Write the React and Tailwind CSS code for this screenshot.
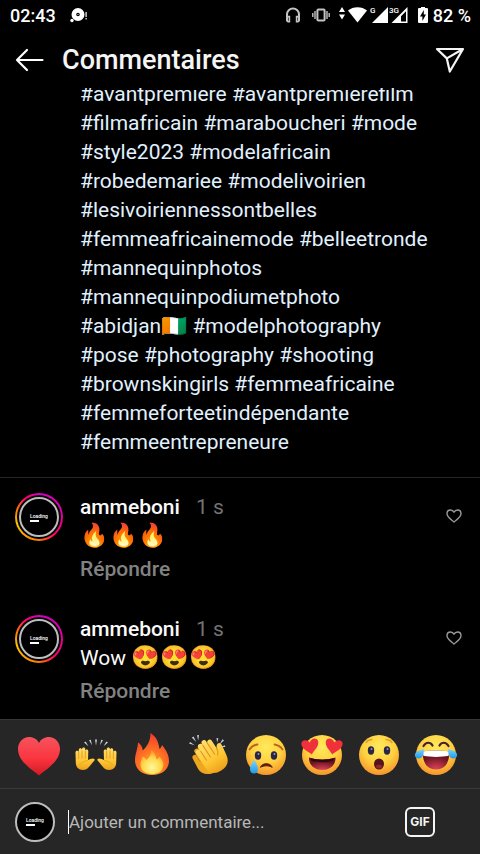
import React, { useState } from 'react';

const hashtags = [
  'avantpremiere', 'avantpremierefilm', 'filmafricain', 'maraboucheri', 'mode',
  'style2023', 'modelafricain', 'robedemariee', 'modelivoirien',
  'lesivoiriennessontbelles', 'femmeafricainemode', 'belleetronde',
  'mannequinphotos', 'mannequinpodiumetphoto', 'abidjan🇨🇮', 'modelphotography',
  'pose', 'photography', 'shooting', 'brownskingirls', 'femmeafricaine',
  'femmeforteetindépendante', 'femmeentrepreneure',
];

const comments = [
  { id: 1, user: 'ammeboni', time: '1 s', emojis: '🔥🔥🔥' },
  { id: 2, user: 'ammeboni', time: '1 s', text: 'Wow ', emojis: '😍😍😍' },
];

/* ---------- status bar ---------- */

function StatusBar() {
  return (
    <div className="flex h-8 items-center justify-between pl-[10px] pr-[9px] text-[18px] leading-8 font-medium">
      <div className="flex items-center gap-[14px]">
        <span>02:43</span>
        <svg width="18" height="18" viewBox="0 0 18 18" fill="#fff">
          <path fillRule="evenodd" d="M8 1a6.500 6.500 0 1 1 0 13A6.500 6.500 0 0 1 8 1Zm0 4.700a1.800 1.800 0 1 0 0 3.600 1.800 1.800 0 0 0 0-3.600Z" />
          <circle cx="8" cy="7.500" r=".6" />
          <circle cx="2" cy="13.500" r="1.700" />
          <rect x="15.500" y="5" width="1.200" height="5" />
          <rect x="15.500" y="11" width="1.200" height="1.400" />
        </svg>
      </div>
      <div className="flex items-center">
        <svg width="16" height="18" viewBox="0 0 16 18" fill="none" stroke="#c4c4c4" strokeWidth="2" className="mr-[11px]">
          <path d="M2 14V7.500a6 6 0 0 1 12 0V14" />
          <path d="M2 9.600h2.400v5H3.200A1.200 1.200 0 0 1 2 13.400ZM14 9.600h-2.400v5h1.200a1.200 1.200 0 0 0 1.200-1.200Z" strokeWidth="1.600" />
        </svg>
        <svg width="18" height="18" viewBox="0 0 18 18" fill="none" stroke="#c4c4c4" className="mr-[9px]">
          <rect x="5.400" y="2.400" width="7.200" height="11.200" rx="1" strokeWidth="2" />
          <path d="M3 4v8M.8 6v4M15 4v8M17.200 6v4" strokeWidth="1.400" />
        </svg>
        <svg width="28" height="18" viewBox="0 0 28 18" fill="#fff" className="mr-[3px]">
          <path d="M3 0l3 5H0ZM3 12.500l3-5H0Z" />
          <path d="M9 3.500C14-1 23-1 28 3.500L18.500 15.500Z" />
        </svg>
        <svg width="18" height="18" viewBox="0 0 18 18" fill="#fff" className="mr-px">
          <path d="M18 0v16H2Z" />
          <text x="0" y="6" fontSize="8" fontWeight="500">G</text>
        </svg>
        <svg width="19" height="18" viewBox="0 0 19 18" fill="#fff" className="mr-[10px]">
          <path fillRule="evenodd" d="M18.500 0v16H2.500ZM17 4.200V14.500H12V9.200Z" />
          <text x="0" y="6" fontSize="8" fontWeight="500" stroke="#000" strokeWidth="2" paintOrder="stroke">3G</text>
        </svg>
        <svg width="10" height="18" viewBox="0 0 10 18" className="mr-[5px]">
          <path d="M3 -1h4v2h2q1 0 1 1v13q0 1-1 1H1q-1 0-1-1V2q0-1 1-1h2Z" fill="#fff" />
          <path d="M5.800 3L2 9.400h2.400V14L8 7.600H5.800Z" fill="#000" />
        </svg>
        <span>82 %</span>
      </div>
    </div>
  );
}

/* ---------- header ---------- */

function Header() {
  return (
    <header className="flex h-14 items-center px-[15px]">
      <button type="button" aria-label="Retour" className="mr-[18px]">
        <svg width="29" height="24" viewBox="0 0 29 24" fill="none" stroke="#fff" strokeWidth="2.200" strokeLinecap="round" strokeLinejoin="round">
          <path d="M12 2L2 12l10 10M2 12h25.500" />
        </svg>
      </button>
      <h1 className="flex-1 text-[27px] leading-8 font-medium text-[#f5f5f5]">Commentaires</h1>
      <button type="button" aria-label="Partager">
        <svg width="30" height="26" viewBox="0 0 30 26" fill="none" stroke="#f5f5f5" strokeWidth="2.200" strokeLinejoin="round">
          <path d="M2 2H28L14.800 24.500L11.800 11.400ZM11.800 11.400L28 2" />
        </svg>
      </button>
    </header>
  );
}

/* ---------- comments ---------- */

function Avatar() {
  return (
    <span className="flex size-10 shrink-0 flex-col items-start justify-center rounded-full border-2 border-[#bdbdbd] bg-black pl-[9px]">
      <span className="text-[5px] leading-[6px] font-medium text-white">Loading</span>
      <span className="mt-px h-[2px] w-[9px] bg-white" />
    </span>
  );
}

function Comment({ comment }) {
  const [liked, setLiked] = useState(false);

  return (
    <li className="flex items-start">
      <span className="mr-[17px] shrink-0 rounded-full bg-[conic-gradient(#d300c5,#e0009b_25%,#ff0069_38%,#ff7a00_50%,#ffc400_70%,#ff7a00_80%,#ff0069_90%,#d300c5)] p-[2px]">
        <span className="flex rounded-full bg-black p-[2px]">
          <Avatar />
        </span>
      </span>
      <div className="flex-1 text-[21px] leading-[29px]">
        <p>
          <a href="#profil" className="mr-4 font-medium text-[#fafafa]">{comment.user}</a>
          <span className="text-[#737373]">{comment.time}</span>
        </p>
        <p className="text-[#fafafa]">
          {comment.text}
          <span className="text-[23px] leading-none">{comment.emojis}</span>
        </p>
        <button type="button" className="mt-1 block font-medium text-[#828282]">Répondre</button>
      </div>
      <button type="button" aria-label="J’aime" onClick={() => setLiked(!liked)} className="mt-4">
        <svg width="16" height="14" viewBox="0 0 16 14" fill={liked ? '#ff3040' : 'none'} stroke="#9a9a9a" strokeWidth="1.400" strokeLinejoin="round">
          <path d="M8 13C4.500 10 1 7.800 1 4.700C1 2.500 2.600 1 4.500 1C6.200 1 7.300 1.900 8 3.200C8.700 1.900 9.800 1 11.500 1C13.400 1 15 2.500 15 4.700C15 7.800 11.500 10 8 13Z" />
        </svg>
      </button>
    </li>
  );
}

/* ---------- quick reactions ---------- */

function Gradients() {
  return (
    <svg width="0" height="0" className="absolute" aria-hidden="true">
      <defs>
        <radialGradient id="face" cx=".5" cy=".3" r=".72">
          <stop offset="0" stopColor="#ffe95c" />
          <stop offset=".55" stopColor="#ffd140" />
          <stop offset="1" stopColor="#f5912a" />
        </radialGradient>
        <linearGradient id="heart" x1="0" y1="0" x2="0" y2="1">
          <stop offset="0" stopColor="#f5535c" />
          <stop offset=".55" stopColor="#fb3640" />
          <stop offset="1" stopColor="#d01a24" />
        </linearGradient>
        <radialGradient id="flame" cx=".5" cy=".8" r=".75">
          <stop offset="0" stopColor="#ffb52e" />
          <stop offset=".5" stopColor="#ff7424" />
          <stop offset="1" stopColor="#f4402c" />
        </radialGradient>
        <radialGradient id="core" cx=".5" cy=".72" r=".65">
          <stop offset="0" stopColor="#fff79a" />
          <stop offset=".6" stopColor="#ffd94a" />
          <stop offset="1" stopColor="#ff9c2e" />
        </radialGradient>
        <linearGradient id="hand" x1="0" y1="0" x2="0" y2="1">
          <stop offset="0" stopColor="#ffdf6e" />
          <stop offset=".6" stopColor="#ffc733" />
          <stop offset="1" stopColor="#eda01c" />
        </linearGradient>
        <linearGradient id="tear" x1="0" y1="0" x2="0" y2="1">
          <stop offset="0" stopColor="#7fd6ff" />
          <stop offset="1" stopColor="#1e9be8" />
        </linearGradient>
        <radialGradient id="mouth" cx=".5" cy="1" r=".7">
          <stop offset="0" stopColor="#e0455a" />
          <stop offset="1" stopColor="#6b1220" />
        </radialGradient>
      </defs>
    </svg>
  );
}

function Heart() {
  return (
    <path d="M21 41.500C15 36 0 28 0 15C0 8 5 3 11 3C15.500 3 19.500 5.500 21 9C22.500 5.500 26.500 3 31 3C37 3 42 8 42 15C42 28 27 36 21 41.500Z" fill="url(#heart)" />
  );
}

function RaisedHand() {
  return (
    <>
      <path d="M.5 18.500C.3 16.300 3 16 3.400 18L3.800 16C3.800 13.600 7 13.600 7 16V15.300C7 12.900 10.300 12.900 10.300 15.300V17C10.400 14.800 13.300 15 13.300 17.200L13 26C14.500 25.500 16 24.600 18 24.600C20.200 24.800 20 26.500 18.500 27.600C15.500 30.500 13.500 36 8 36C3.500 36 1 33 .8 29Z" fill="url(#hand)" />
      <path d="M3.700 18v7M7 16.500v8M10.300 17v7.500" stroke="#d98f16" strokeWidth=".8" fill="none" />
      <path d="M4.500 31c2.500-3.500 6-4 8.300-4.500" stroke="#e39a1c" strokeWidth=".8" fill="none" />
    </>
  );
}

function Hands() {
  return (
    <>
      <RaisedHand />
      <g transform="translate(42 0) scale(-1 1)"><RaisedHand /></g>
      <path d="M9 8.500l1.700-1 2.700 4.700ZM14 6.300l1.800-.5 1.200 5.500ZM20 5.500h2L21 11.500ZM26.200 5.800l1.800.5-3 5ZM31.300 7.500l1.700 1-4.400 3.700Z" fill="#c9cdd2" />
    </>
  );
}

function Fire() {
  return (
    <g transform="translate(-1 -1)">
      <path d="M19.500 0C25 3.500 27.500 8.500 28.500 16C29.800 15 30.500 13.700 31 12C35 17 38 21.500 38 28C38 36.500 31 42 21 42C11 42 4 36 4 27.500C4 21 6.500 17 7 9.500C9.500 11 11.200 13.500 11.800 17.500C16.500 13 19.500 7.500 19.500 0Z" fill="url(#flame)" />
      <path d="M20.500 17C24 20 25 23.500 25.500 26.500C27 25.800 27.800 24.800 28.500 23.500C31.500 27 33 30 32 34C30.500 39 26.500 41 21 41C14.500 41 9.500 37.500 9.500 31.500C9.500 28 11 26 11.500 23.500C13.500 24.200 14.500 25.200 15.300 27C18.500 24.500 20.500 21 20.500 17Z" fill="url(#core)" />
    </g>
  );
}

function Clap() {
  return (
    <>
      <g transform="translate(1 1) rotate(-33 21 24) scale(1.120 .96)">
        <path d="M6 15C6 11.500 10.500 11.500 10.500 15V10.500C10.500 7 15 7 15 10.500V9C15 5.500 20 5.500 20 9V27L14 39C8 37 5 33 5 27Z" fill="#eea520" />
        <path d="M10 13v9M14.500 10v10" stroke="#cf8515" strokeWidth=".8" fill="none" />
        <path d="M11 18V12.500C11 9 15.500 9 15.500 12.500V8.500C15.500 5 20 5 20 8.500V7.300C20 3.700 24.500 3.700 24.500 7.300V10C24.500 6.700 29 6.700 29 10V20C29.700 17.500 30.700 15.500 32.700 16C34.700 16.500 34.500 19 34.200 21L33 31C32 38 28 41.500 21.500 41.500C15 41.500 11 37.500 11 31Z" fill="url(#hand)" />
        <path d="M15.500 13v11M20 9v14.500M24.500 9v14.500M29 19c0 3-.8 5-2.800 7" stroke="#dc9219" strokeWidth=".9" fill="none" strokeLinecap="round" />
      </g>
      <path d="M1 9.500l1.200-1.500 4.500 3.300ZM3.800 3.500l1.800-1 2.600 5.500ZM9 1.200l2-.1-.8 5.300ZM28.500 4l1.900.3-1.300 4.500ZM34.500 5.200l1.500 1.300-4.500 4ZM37 11.200l.3 1.900-5.500.2Z" fill="#c4cbe0" />
    </>
  );
}

function Face() {
  return <circle cx="21" cy="21" r="20" fill="url(#face)" />;
}

function Eyes({ y }) {
  return (
    <g>
      <ellipse cx="13" cy={y} rx="3.200" ry="4.200" fill="#2b2547" />
      <ellipse cx="29" cy={y} rx="3.200" ry="4.200" fill="#2b2547" />
      <circle cx="13.500" cy={y - 1.6} r="1" fill="#8f93b8" />
      <circle cx="29.500" cy={y - 1.6} r="1" fill="#8f93b8" />
    </g>
  );
}

function Sad() {
  return (
    <>
      <Face />
      <Eyes y={21.5} />
      <path d="M4.500 15.500C6.500 12.500 9 11 12.500 10.500M37.500 15.500C35.500 12.500 33 11 29.500 10.500" stroke="#b9631c" strokeWidth="1.800" fill="none" strokeLinecap="round" />
      <path d="M15.500 33.300C17 28.500 25.500 28.500 27.200 33.300C24 31.300 19 31.300 15.500 33.300Z" fill="#5c1a16" stroke="#5c1a16" strokeLinejoin="round" />
      <path d="M9 25.500C11 29 13 32 13 35.200C13 38 11.200 39.500 9 39.500C6.700 39.500 5 38 5 35.200C5 32 7.200 29 9 25.500Z" fill="url(#tear)" />
    </>
  );
}

const smallHeart = 'M0 7.500C-3 4-8.500 1-8.500-4C-8.500-8.500-2.500-9-0-4.500C2.500-9 8.500-8.500 8.500-4C8.500 1 3 4 0 7.500Z';

function HeartEyes() {
  return (
    <>
      <Face />
      <path d={smallHeart} transform="translate(9.500 13) rotate(-10)" fill="#f0303c" />
      <path d={smallHeart} transform="translate(32.500 13) rotate(10)" fill="#f0303c" />
      <path d="M8 23.500C15 26 27 26 34.500 23.500C35 31 29 36 21.200 36C13.500 36 7.500 31 8 23.500Z" fill="url(#mouth)" />
      <path d="M9.500 24C16 26.200 26.500 26.200 33 24L32 27C25 28.600 17 28.600 10.500 27Z" fill="#2e0b12" />
    </>
  );
}

function Surprised() {
  return (
    <>
      <Face />
      <path d="M8 8.500C9.500 6.500 11.500 5.500 14 5.500M34 8.500C32.500 6.500 30.500 5.500 28 5.500" stroke="#e99a2e" strokeWidth="1.400" fill="none" strokeLinecap="round" />
      <Eyes y={16.5} />
      <ellipse cx="21" cy="30" rx="5" ry="5.500" fill="#571419" />
      <ellipse cx="21" cy="32.500" rx="3" ry="2" fill="#8e2730" />
    </>
  );
}

function Joy() {
  return (
    <>
      <Face />
      <path d="M8.500 12C11 7.500 15.500 8 17.500 11.500M24.500 11.500C26.500 8 31 7.500 33.500 12" stroke="#452238" strokeWidth="2.200" fill="none" strokeLinecap="round" />
      <path d="M8 17.500C16 16.300 26 16.300 34 17.500C35 28 30 35.500 21 35.500C12 35.500 7 28 8 17.500Z" fill="url(#mouth)" />
      <path d="M8 17.500C16 16.300 26 16.300 34 17.500C34.200 19 34 20.500 33.600 21.800C26 23.300 16 23.300 8.400 21.800C8 20.500 7.800 19 8 17.500Z" fill="#fff" />
      <path d="M8.500 14.500C9.500 20 7.500 24.500 3.800 24.500C.5 24.500-1 21.500.5 19C2 16.500 6 17 8.500 14.500Z" fill="url(#tear)" />
      <path d="M33.500 14.500C32.500 20 34.500 24.500 38.200 24.500C41.500 24.500 43 21.500 41.500 19C40 16.500 36 17 33.500 14.500Z" fill="url(#tear)" />
    </>
  );
}

const reactions = [
  { label: 'Cœur', Icon: Heart },
  { label: 'Mains levées', Icon: Hands },
  { label: 'Feu', Icon: Fire },
  { label: 'Applaudissements', Icon: Clap },
  { label: 'Triste', Icon: Sad },
  { label: 'Yeux en cœur', Icon: HeartEyes },
  { label: 'Surpris', Icon: Surprised },
  { label: 'Rire aux larmes', Icon: Joy },
];

function Composer() {
  const [value, setValue] = useState('');

  return (
    <footer className="bg-[#262626]">
      <Gradients />
      <div className="flex border-t border-[#363636] pt-[14px] pb-3 pl-[11px] pr-4">
        {reactions.map(({ label, Icon }) => (
          <button key={label} type="button" aria-label={label} className="flex flex-1 justify-center">
            <svg width="42" height="42" viewBox="0 0 42 42" overflow="visible">
              <Icon />
            </svg>
          </button>
        ))}
      </div>
      <form className="flex h-[66px] items-center border-t border-[#3a3a3a] pl-[15px] pr-[45px]" onSubmit={(e) => e.preventDefault()}>
        <Avatar />
        <span className="ml-[13px] h-6 w-px bg-white" />
        <input
          type="text"
          aria-label="Ajouter un commentaire"
          value={value}
          onChange={(e) => setValue(e.target.value)}
          placeholder="Ajouter un commentaire..."
          className="h-10 min-w-0 flex-1 bg-transparent text-[17px] text-[#fafafa] outline-none placeholder:text-[#b8b8b8]"
        />
        <button type="button" className="size-[30px] rounded-[6px] border-2 border-[#f5f5f5] font-['Inter'] text-[12px] leading-none font-bold text-[#f5f5f5]">
          GIF
        </button>
      </form>
    </footer>
  );
}

export default function App() {
  return (
    <div className="flex h-screen flex-col bg-black font-['Roboto',sans-serif] text-white">
      <StatusBar />
      <Header />
      <main className="flex min-h-0 flex-1 flex-col justify-end overflow-hidden">
        <p className="border-b border-[#262626] pb-5 pl-20 pr-10 text-[21px] leading-[29px] text-[#e0f1ff]">
          {hashtags.map((tag) => (
            <React.Fragment key={tag}>
              <a href="#tag" className="whitespace-nowrap">#{tag}</a>{' '}
            </React.Fragment>
          ))}
        </p>
        <ul className="flex flex-col gap-[31px] pt-[15px] pb-[13px] pl-[15px] pr-[18px]">
          {comments.map((comment) => (
            <Comment key={comment.id} comment={comment} />
          ))}
        </ul>
      </main>
      <Composer />
    </div>
  );
}
